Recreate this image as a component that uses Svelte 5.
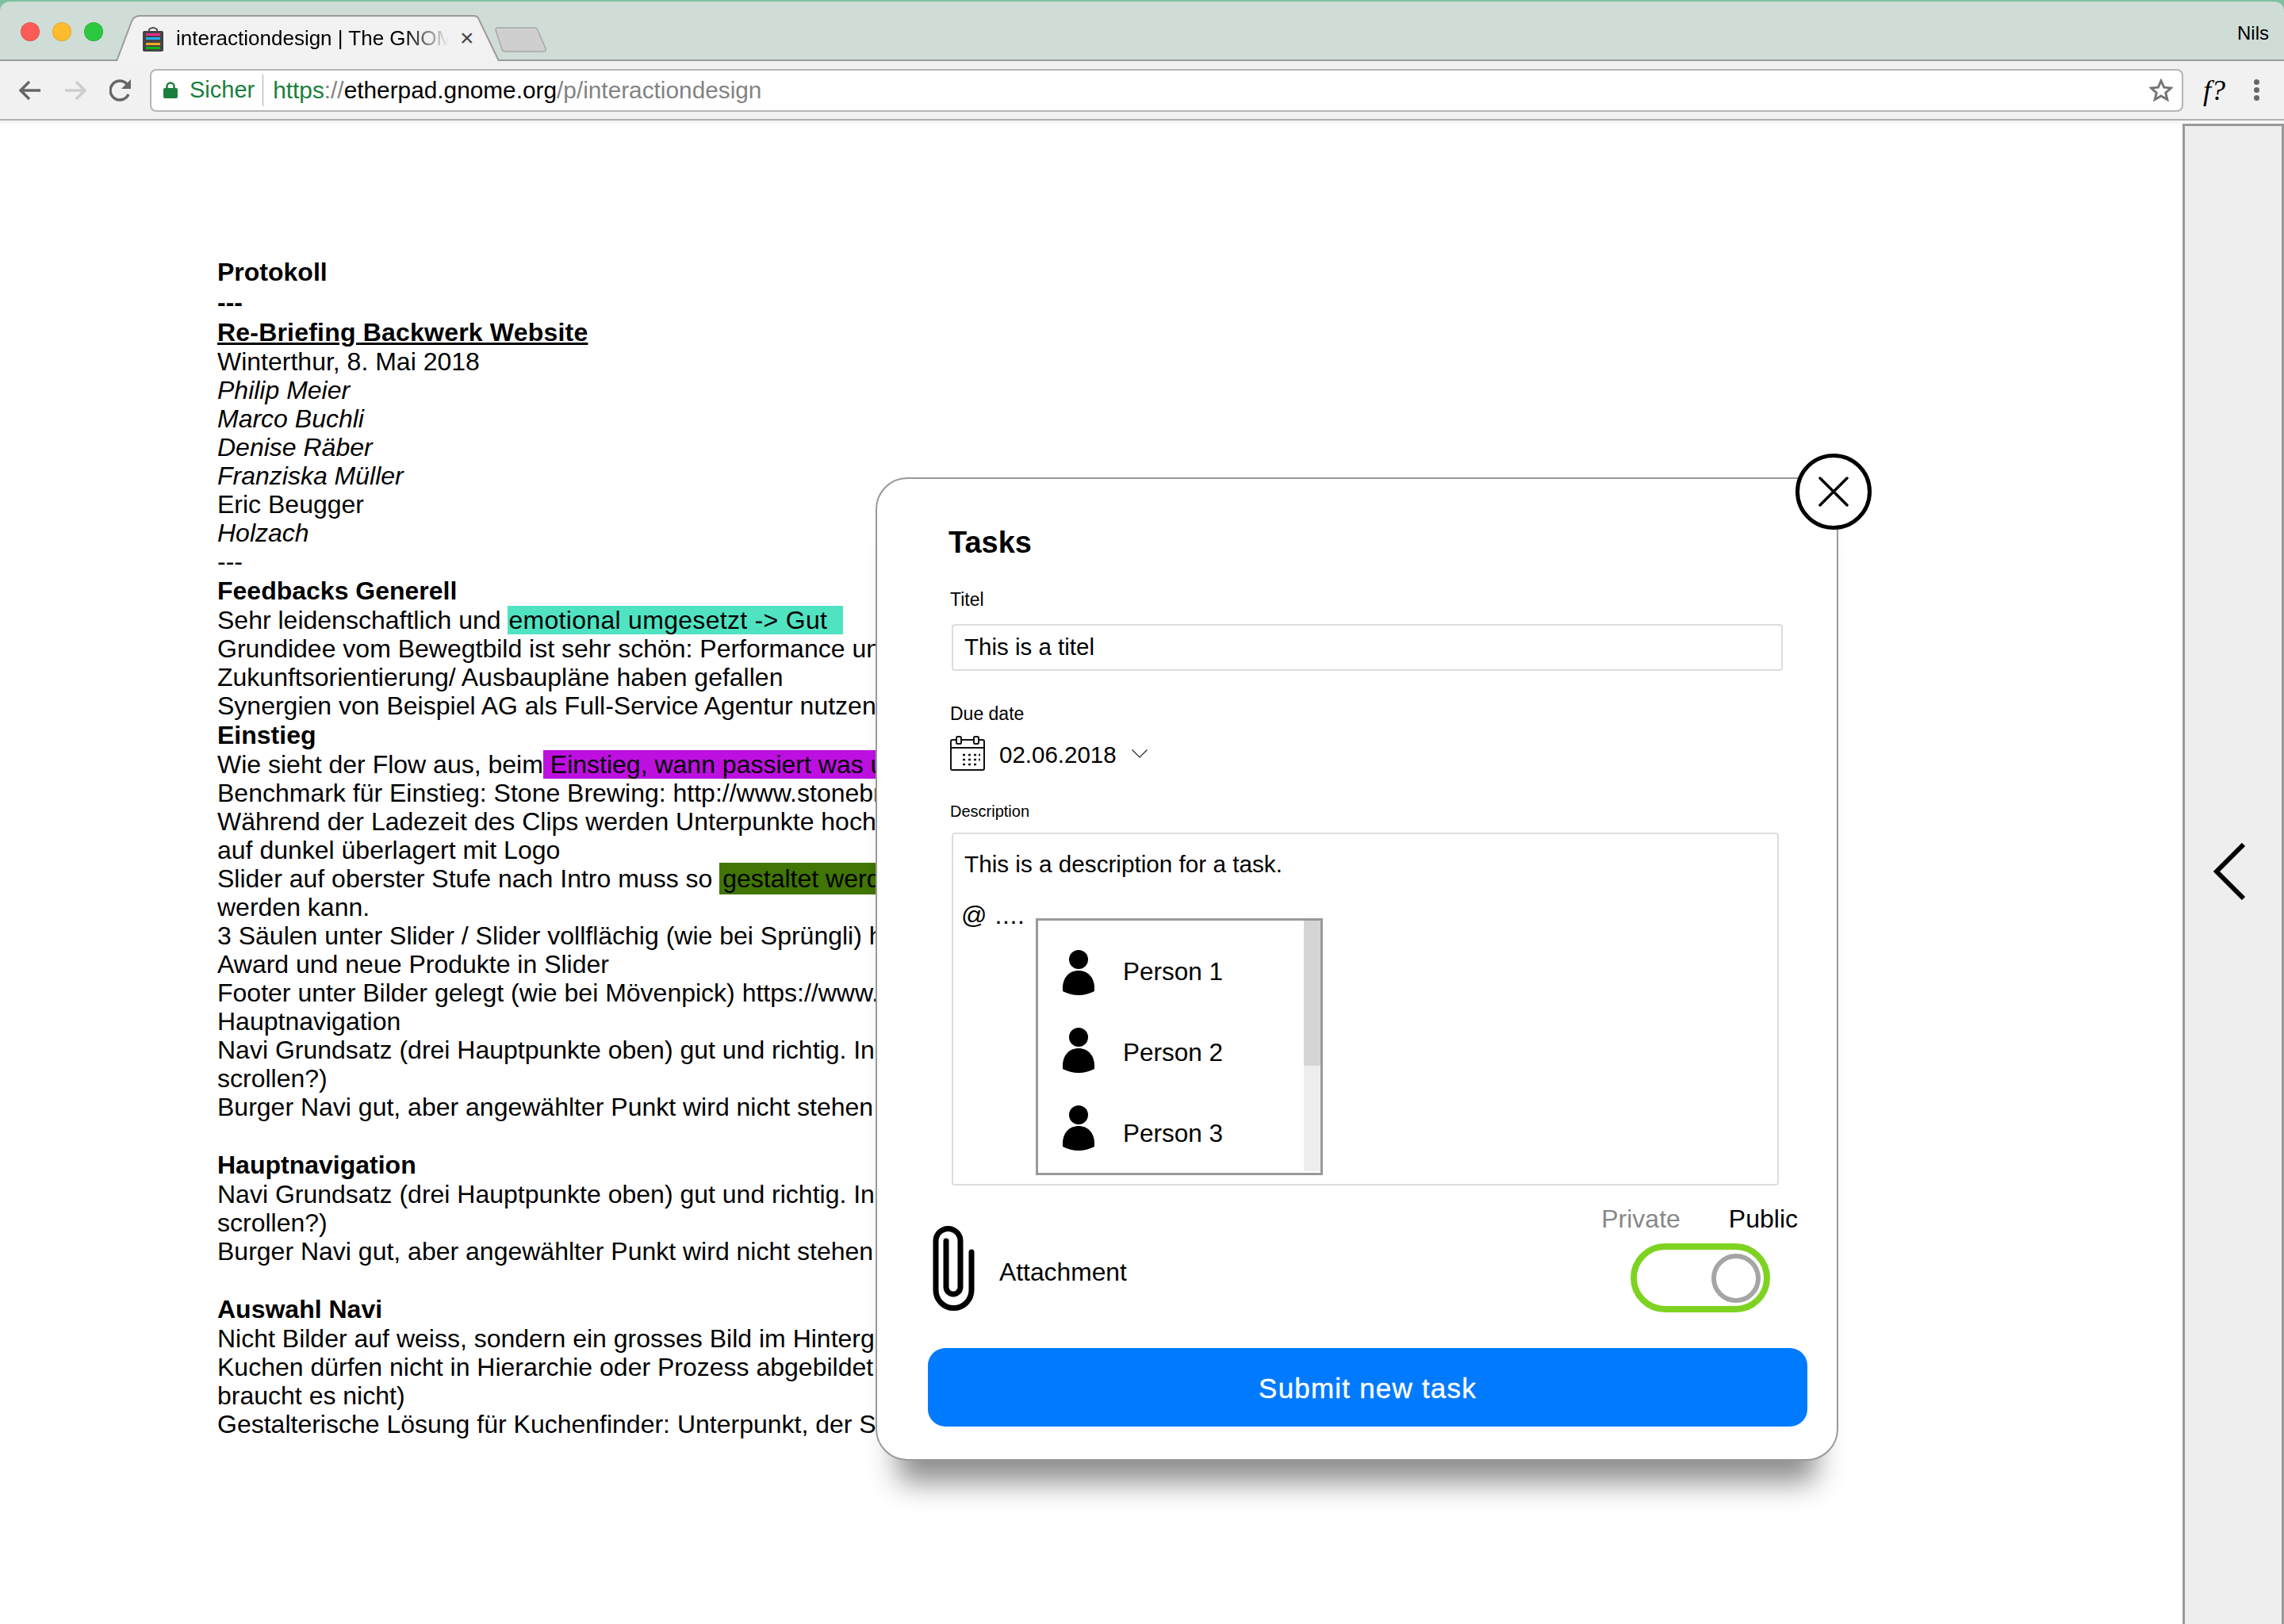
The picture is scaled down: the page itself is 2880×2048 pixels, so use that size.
<script>
	const lines = [
		{ t: 'Protokoll', c: 'bold' },
		{ t: '---', c: 'bold' },
		{ t: 'Re-Briefing Backwerk Website', c: 'bold under' },
		{ t: 'Winterthur, 8. Mai 2018' },
		{ t: 'Philip Meier', c: 'ital' },
		{ t: 'Marco Buchli', c: 'ital' },
		{ t: 'Denise Räber', c: 'ital' },
		{ t: 'Franziska Müller', c: 'ital' },
		{ t: 'Eric Beugger' },
		{ t: 'Holzach', c: 'ital' },
		{ t: '---' },
		{ t: 'Feedbacks Generell', c: 'bold' },
		{ t: 'Sehr leidenschaftlich und ', mark: 'emotional umgesetzt -> Gut', m: 'teal' },
		{ t: 'Grundidee vom Bewegtbild ist sehr schön: Performance und Emotionen' },
		{ t: 'Zukunftsorientierung/ Ausbaupläne haben gefallen' },
		{ t: 'Synergien von Beispiel AG als Full-Service Agentur nutzen' },
		{ t: 'Einstieg', c: 'bold' },
		{ t: 'Wie sieht der Flow aus, beim', mark: 'Einstieg, wann passiert was und', m: 'purple' },
		{ t: 'Benchmark für Einstieg: Stone Brewing: http://www.stonebrewing.com' },
		{ t: 'Während der Ladezeit des Clips werden Unterpunkte hochgeladen' },
		{ t: 'auf dunkel überlagert mit Logo' },
		{ t: 'Slider auf oberster Stufe nach Intro muss so ', mark: 'gestaltet werden', m: 'green' },
		{ t: 'werden kann.' },
		{ t: '3 Säulen unter Slider / Slider vollflächig (wie bei Sprüngli) hat' },
		{ t: 'Award und neue Produkte in Slider' },
		{ t: 'Footer unter Bilder gelegt (wie bei Mövenpick) https://www.moevenpick.com' },
		{ t: 'Hauptnavigation' },
		{ t: 'Navi Grundsatz (drei Hauptpunkte oben) gut und richtig. In' },
		{ t: 'scrollen?)' },
		{ t: 'Burger Navi gut, aber angewählter Punkt wird nicht stehen' },
		{ t: '\u00a0' },
		{ t: 'Hauptnavigation', c: 'bold' },
		{ t: 'Navi Grundsatz (drei Hauptpunkte oben) gut und richtig. In' },
		{ t: 'scrollen?)' },
		{ t: 'Burger Navi gut, aber angewählter Punkt wird nicht stehen' },
		{ t: '\u00a0' },
		{ t: 'Auswahl Navi', c: 'bold' },
		{ t: 'Nicht Bilder auf weiss, sondern ein grosses Bild im Hintergrund' },
		{ t: 'Kuchen dürfen nicht in Hierarchie oder Prozess abgebildet werden' },
		{ t: 'braucht es nicht)' },
		{ t: 'Gestalterische Lösung für Kuchenfinder: Unterpunkt, der Sich' }
	]

	const persons = ['Person 1', 'Person 2', 'Person 3']
</script>

<div class="page">
	<header class="chrome">
		<div class="tabbar">
			<div class="lights">
				<span class="light red"></span>
				<span class="light yellow"></span>
				<span class="light lime"></span>
			</div>
			<div class="tab">
				<svg class="tab-shape" width="484" height="58" viewBox="0 0 484 58">
					<path d="M1 58 L20 8 Q23 1 30 1 H452 Q457 1 459 8 L483 58" fill="#f2f2f2" stroke="#9a9a9a" stroke-width="2" />
				</svg>
				<svg class="favicon" width="26" height="31" viewBox="0 0 26 31">
					<path d="M8 6 V3 Q13 -1 18 3 V6" fill="none" stroke="#555" stroke-width="2" />
					<rect x="0" y="5" width="26" height="26" rx="2" fill="#444" />
					<rect x="4" y="8" width="18" height="3" fill="#ec2a8c" />
					<rect x="4" y="13" width="18" height="3" fill="#27a9ee" />
					<rect x="4" y="20" width="18" height="3" fill="#f5a623" />
					<rect x="4" y="25" width="18" height="3" fill="#0fb50f" />
				</svg>
				<span class="tab-title">interactiondesign | The GNOME Etherpad</span>
				<span class="tab-close">×</span>
			</div>
			<svg class="newtab" width="66" height="32" viewBox="0 0 66 32">
				<path d="M1 4 Q1 1 4 1 H50 Q53 1 54 4 L64 27 Q65 31 61 31 H13 Q10 31 9 28 Z" fill="#cfcfcf" stroke="#a8a8a8" stroke-width="1.500" />
			</svg>
			<span class="user">Nils</span>
		</div>
		<div class="toolbar">
			<svg class="tool back" width="27" height="26" viewBox="0 0 27 26" fill="none" stroke="#666" stroke-width="3.500">
				<path d="M27 13 H3 M13 2 L2 13 L13 24" />
			</svg>
			<svg class="tool forward" width="27" height="26" viewBox="0 0 27 26" fill="none" stroke="#cdcdcd" stroke-width="3.500">
				<path d="M0 13 H24 M14 2 L25 13 L14 24" />
			</svg>
			<svg class="tool reload" width="28" height="28" viewBox="0 0 28 28" fill="none">
				<path d="M24 19 A12 12 0 1 1 22 6" stroke="#666" stroke-width="3.500" />
				<path d="M27 0 V12 H15 Z" fill="#666" />
			</svg>
			<div class="urlbox">
				<svg class="lock" width="18" height="21" viewBox="0 0 18 21">
					<path d="M4.500 9 V6 A4.500 4.500 0 0 1 13.500 6 V9" fill="none" stroke="#1a7f3c" stroke-width="2.500" />
					<rect x="0" y="8" width="18" height="13" rx="2" fill="#1a7f3c" />
				</svg>
				<span class="secure">Sicher</span>
				<span class="divider"></span>
				<span class="url"><span class="secure">https</span><span class="dim">://</span>etherpad.gnome.org<span class="dim">/p/interactiondesign</span></span>
				<svg class="star" width="30" height="29" viewBox="0 0 30 29">
					<path d="M15 3 L18.700 11.200 L27.500 12 L20.800 18 L22.800 26.500 L15 22 L7.200 26.500 L9.200 18 L2.500 12 L11.300 11.200 Z" fill="none" stroke="#757575" stroke-width="3" />
				</svg>
			</div>
			<span class="fx">f?</span>
			<div class="dots"><span></span><span></span><span></span></div>
		</div>
		<div class="underbar"></div>
	</header>

	<main class="main">
		<article class="doc">
			{#each lines as line}
				<div class="line {line.c ?? ''}">{line.t}{#if line.mark}<span class="mark {line.m}">{line.mark}</span>{/if}</div>
			{/each}
		</article>
		<aside class="sidebar">
			<svg width="42" height="72" viewBox="0 0 42 72" fill="none" stroke="#000" stroke-width="6">
				<path d="M39 2 L5 36 L39 70" />
			</svg>
		</aside>
	</main>

	<section class="modal">
		<button class="close" aria-label="Close">
			<svg width="38" height="38" viewBox="0 0 38 38" stroke="#000" stroke-width="3.500" stroke-linecap="round">
				<path d="M2 2 L36 36 M36 2 L2 36" />
			</svg>
		</button>

		<h1>Tasks</h1>

		<div class="label titel">Titel</div>
		<div class="input">This is a titel</div>

		<div class="label due">Due date</div>
		<div class="date">
			<svg width="44" height="44" viewBox="0 0 44 44" fill="none" stroke="#111" stroke-width="2">
				<rect x="1" y="5" width="42" height="38" rx="2" />
				<path d="M1 15 H43" />
				<rect x="8" y="1" width="6" height="9" rx="1.500" fill="#fff" />
				<rect x="30" y="1" width="6" height="9" rx="1.500" fill="#fff" />
				<path d="M16 24 h3 M23 24 h3 M30 24 h3 M36 24 h2 M16 30 h3 M23 30 h3 M30 30 h3 M36 30 h2 M16 36 h3 M23 36 h3 M30 36 h3" stroke-width="2.500" />
			</svg>
			<span>02.06.2018</span>
			<svg class="caret" width="20" height="11" viewBox="0 0 20 11" fill="none" stroke="#222" stroke-width="1.200">
				<path d="M0.500 0.500 L10 10 L19.500 0.500" />
			</svg>
		</div>

		<div class="label desc">Description</div>
		<div class="textarea">
			<div class="desc-text">This is a description for a task.</div>
			<div class="mention">@ ....</div>
			<div class="menu">
				<ul>
					{#each persons as name, i}
						<li>
							<svg width="40" height="58" viewBox="0 0 40 58">
								<circle cx="20" cy="12" r="12" />
								<path d="M0 52 V48 C0 35 8 26 20 26 C32 26 40 35 40 48 V52 Q20 62 0 52 Z" />
							</svg>
							<span style="margin-top: {9 + i * 4}px">{name}</span>
						</li>
					{/each}
				</ul>
				<div class="scrollbar"><div class="thumb"></div></div>
			</div>
		</div>

		<div class="options">
			<div class="attach">
				<svg width="53" height="109" viewBox="0 0 53 109" fill="none" stroke="#000" stroke-width="7" stroke-linecap="round">
					<path d="M49 34 V82 A22.500 22.500 0 0 1 4 82 V20 A15.500 15.500 0 0 1 35 20 V78 A9 9 0 0 1 17 78 V20" />
				</svg>
				<span>Attachment</span>
			</div>
			<div class="visibility">
				<div class="vis-labels"><span class="off">Private</span><span>Public</span></div>
				<div class="toggle"><div class="knob"></div></div>
			</div>
		</div>

		<button class="submit">Submit new task</button>
	</section>
</div>

<style>
	:global(body) {
		margin: 0;
		background: #fff;
	}

	.page {
		position: relative;
		display: flex;
		flex-direction: column;
		width: 2880px;
		height: 2048px;
		overflow: hidden;
		font-family: "Liberation Sans", Arial, sans-serif;
		color: #000;
	}

	.chrome {
		flex: none;
		height: 156px;
		padding-top: 2px;
		box-sizing: border-box;
		background: #7fc0a2;
		display: flex;
		flex-direction: column;
	}

	.tabbar {
		flex: none;
		height: 73px;
		display: flex;
		align-items: flex-end;
		background: #cfddd6;
		border-radius: 12px 12px 0 0;
		border-bottom: 2px solid #999;
		box-sizing: content-box;
	}

	.lights {
		align-self: flex-start;
		display: flex;
		gap: 16px;
		margin: 26px 0 0 26px;
		width: 121px;
	}

	.light {
		width: 24px;
		height: 24px;
		border-radius: 50%;
		box-sizing: border-box;
		border: 1px solid rgba(0, 0, 0, 0.1);
	}

	.red { background: #fc5b57; }
	.yellow { background: #fdbc2e; }
	.lime { background: #2bc840; }

	.tab {
		position: relative;
		flex: none;
		width: 484px;
		height: 58px;
		margin-left: -1px;
		margin-bottom: -2px;
		display: flex;
		align-items: center;
	}

	.tab-shape {
		position: absolute;
		left: 0;
		top: 0;
	}

	.favicon {
		position: relative;
		margin-left: 34px;
		margin-top: 2px;
	}

	.tab-title {
		position: relative;
		margin-left: 16px;
		width: 344px;
		overflow: hidden;
		white-space: nowrap;
		font-size: 26px;
		-webkit-mask-image: linear-gradient(to right, #000 84%, transparent 100%);
		mask-image: linear-gradient(to right, #000 84%, transparent 100%);
	}

	.tab-close {
		position: relative;
		margin-left: 14px;
		font-size: 30px;
		color: #444;
	}

	.newtab {
		flex: none;
		margin: 0 0 9px -6px;
	}

	.user {
		margin-left: auto;
		align-self: flex-start;
		margin-top: 26px;
		margin-right: 19px;
		font-size: 24px;
		line-height: 28px;
	}

	.toolbar {
		flex: none;
		height: 73px;
		display: flex;
		align-items: center;
		background: #f1f1f1;
		border-bottom: 2px solid #b0b0b0;
		box-sizing: content-box;
		padding-left: 24px;
	}

	.back { margin-right: 31px; }
	.forward { margin-right: 29px; }
	.reload { margin-right: 23px; }

	.urlbox {
		box-sizing: border-box;
		width: 2564px;
		height: 54px;
		background: #fff;
		border: 2px solid #b5b5b5;
		border-radius: 8px;
		display: flex;
		align-items: center;
		padding-left: 15px;
		font-size: 29px;
		white-space: nowrap;
	}

	.lock { flex: none; }
	.secure { color: #1a7f3c; }
	.urlbox > .secure { margin-left: 15px; }

	.divider {
		width: 1px;
		height: 40px;
		background: #aaa;
		margin: 0 12px 0 10px;
	}

	.url { font-size: 29.800px; }
	.dim { color: #838383; }

	.star {
		margin-left: auto;
		margin-right: 11px;
	}

	.fx {
		margin-left: 14px;
		font-family: "Liberation Serif", serif;
		font-style: italic;
		font-size: 36px;
		width: 50px;
		text-align: center;
	}

	.dots {
		margin-left: 25px;
		display: flex;
		flex-direction: column;
		gap: 3px;
	}

	.dots span {
		width: 7px;
		height: 7px;
		border-radius: 50%;
		background: #666;
	}

	.underbar {
		flex: 1;
		background: #f6f6f6;
	}

	.main {
		flex: 1;
		display: flex;
		min-height: 0;
	}

	.doc {
		flex: 1;
		padding: 168px 0 0 274px;
		font-size: 32px;
	}

	.line {
		width: 831px;
		height: 36px;
		line-height: 36px;
		white-space: nowrap;
		overflow-x: clip;
	}

	.bold {
		font-weight: bold;
		height: 38px;
		line-height: 38px;
	}

	.under {
		text-decoration: underline;
		letter-spacing: 0.2px;
	}

	.ital { font-style: italic; }

	.teal {
		background: #50e3c2;
		padding: 0 20px 0 1px;
		letter-spacing: 0.3px;
	}

	.purple {
		background: #bd10e0;
		padding-left: 9px;
	}

	.green {
		background: #417505;
		padding: 2px 0 2px 4px;
	}

	.sidebar {
		flex: none;
		width: 128px;
		box-sizing: border-box;
		background: #eee;
		border: 3px solid #999;
		border-bottom: 0;
		display: flex;
		justify-content: center;
		padding-top: 904px;
		padding-right: 10px;
	}

	.sidebar svg { flex: none; }

	.modal {
		position: absolute;
		left: 1104px;
		top: 602px;
		width: 1214px;
		height: 1240px;
		box-sizing: border-box;
		background: #fff;
		border: 2px solid #999;
		border-radius: 40px;
		padding: 0 37px 0 64px;
		box-shadow: 0 55px 36px -28px rgba(0, 0, 0, 0.45);
		display: flex;
		flex-direction: column;
		align-items: flex-start;
	}

	.close {
		position: absolute;
		left: 1158px;
		top: -32px;
		width: 96px;
		height: 96px;
		padding: 0;
		box-sizing: border-box;
		background: #fff;
		border: 5px solid #000;
		border-radius: 50%;
		display: flex;
		align-items: center;
		justify-content: center;
	}

	h1 {
		margin: 58px 0 0 26px;
		font-size: 38px;
		line-height: 44px;
		font-weight: bold;
	}

	.label {
		margin-left: 28px;
		font-size: 23px;
		line-height: 28px;
	}

	.titel { margin-top: 36px; }
	.due { margin-top: 40px; }

	.input {
		box-sizing: border-box;
		width: 1048px;
		height: 59px;
		margin: 17px 0 0 30px;
		padding-left: 14px;
		border: 2px solid #ddd;
		border-radius: 4px;
		font-size: 29.500px;
		line-height: 53px;
	}

	.date {
		margin: 14px 0 0 28px;
		display: flex;
		align-items: center;
		height: 44px;
		font-size: 29.500px;
	}

	.date span {
		margin-left: 18px;
		padding-top: 3px;
	}

	.caret { margin-left: 19px; }

	.desc {
		margin-top: 38px;
		font-size: 20px;
		line-height: 26px;
	}

	.textarea {
		position: relative;
		box-sizing: border-box;
		width: 1043px;
		height: 445px;
		margin: 14px 0 0 30px;
		padding: 21px 0 0 14px;
		border: 2px solid #ddd;
		border-radius: 4px;
		font-size: 29.700px;
	}

	.desc-text { line-height: 34px; }

	.mention {
		margin: 30px 0 0 -4px;
		line-height: 34px;
		font-size: 32px;
		letter-spacing: 0.6px;
	}

	.menu {
		position: absolute;
		left: 104px;
		top: 106px;
		width: 362px;
		height: 324px;
		box-sizing: border-box;
		background: #fff;
		border: 3px solid #999;
		display: flex;
	}

	ul {
		flex: 1;
		list-style: none;
		margin: 0;
		padding: 37px 0 0 31px;
	}

	li {
		display: flex;
		align-items: flex-start;
		height: 98px;
		font-size: 31.500px;
		line-height: 36px;
	}

	li span { margin-left: 36px; }

	.scrollbar {
		flex: none;
		width: 21px;
		height: 316px;
		background: #eee;
	}

	.thumb {
		height: 183px;
		background: #d5d5d5;
	}

	.options {
		align-self: stretch;
		margin-top: 24px;
		display: flex;
		align-items: flex-end;
		justify-content: space-between;
	}

	.attach {
		display: flex;
		align-items: center;
		margin: 0 0 1px 6px;
		font-size: 31.800px;
	}

	.attach span {
		margin: 10px 0 0 31px;
	}

	.visibility { margin-right: 12px; }

	.vis-labels {
		display: flex;
		gap: 61px;
		font-size: 32px;
		line-height: 36px;
	}

	.off { color: #888; }

	.toggle {
		box-sizing: border-box;
		width: 176px;
		height: 87px;
		margin: 13px 0 0 37px;
		border: 8px solid #7ed321;
		border-radius: 44px;
		display: flex;
		align-items: center;
		justify-content: flex-end;
		padding-right: 4px;
	}

	.knob {
		box-sizing: border-box;
		width: 62px;
		height: 62px;
		border: 6px solid #a5a5a5;
		border-radius: 50%;
	}

	.submit {
		align-self: stretch;
		margin-top: 45px;
		height: 99px;
		padding: 3px 0 0;
		border: 0;
		border-radius: 22px;
		background: #007aff;
		color: #fff;
		font-family: "Liberation Sans", Arial, sans-serif;
		font-size: 35px;
		letter-spacing: 1.2px;
		-webkit-text-stroke: 0.4px #fff;
	}
</style>
